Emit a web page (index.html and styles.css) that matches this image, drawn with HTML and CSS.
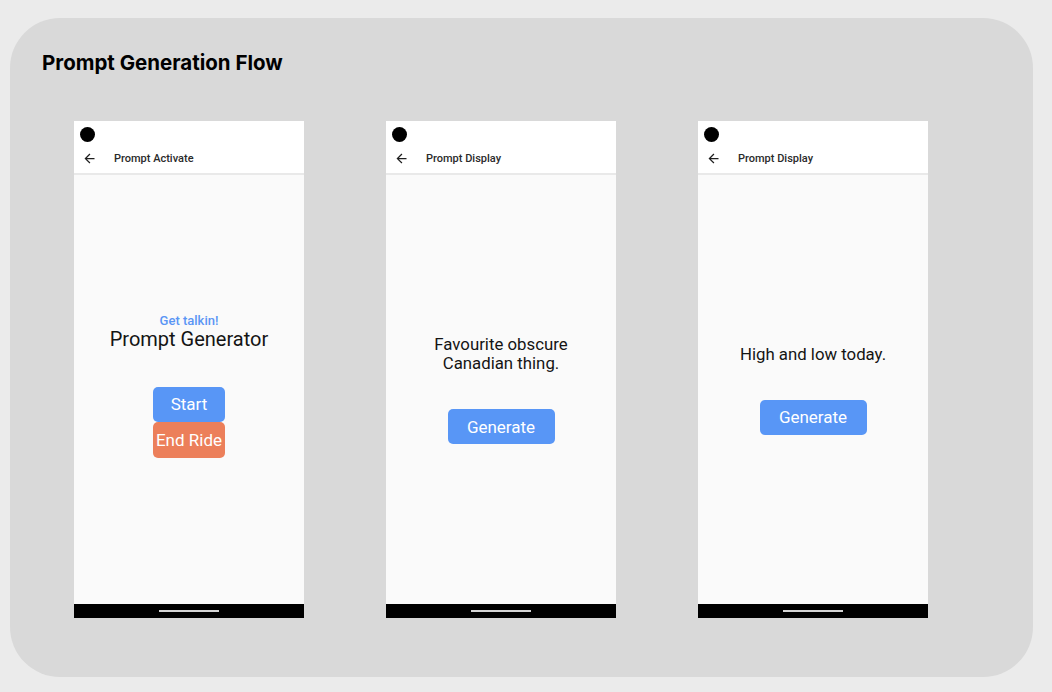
FILE: index.html
```html
<!DOCTYPE html>
<html lang="en">
<head>
<meta charset="utf-8">
<title>Prompt Generation Flow</title>
<link rel="stylesheet" href="styles.css">
</head>
<body>
<main class="board">
  <h1 class="board-title">Prompt Generation Flow</h1>
  <div class="screens">
    <section class="phone">
      <header class="phone-head">
        <div class="status"><span class="camera"></span></div>
        <div class="appbar">
          <svg class="back" viewBox="0 0 24 24" width="15" height="15"><path d="M20 11H7.83l5.59-5.59L12 4l-8 8 8 8 1.41-1.41L7.83 13H20v-2z" fill="#1f1f1f"/></svg>
          <span class="appbar-title">Prompt Activate</span>
        </div>
      </header>
      <div class="phone-body body-activate">
        <div class="group">
          <p class="kicker">Get talkin!</p>
          <p class="big-title">Prompt Generator</p>
          <div class="stack">
            <button class="btn btn-blue btn-narrow">Start</button>
            <button class="btn btn-orange btn-narrow btn-tall">End Ride</button>
          </div>
        </div>
      </div>
      <footer class="navbar"><span class="home"></span></footer>
    </section>

    <section class="phone">
      <header class="phone-head">
        <div class="status"><span class="camera"></span></div>
        <div class="appbar">
          <svg class="back" viewBox="0 0 24 24" width="15" height="15"><path d="M20 11H7.83l5.59-5.59L12 4l-8 8 8 8 1.41-1.41L7.83 13H20v-2z" fill="#1f1f1f"/></svg>
          <span class="appbar-title">Prompt Display</span>
        </div>
      </header>
      <div class="phone-body">
        <div class="group">
          <p class="prompt">Favourite obscure<br>Canadian thing.</p>
          <button class="btn btn-blue btn-wide">Generate</button>
        </div>
      </div>
      <footer class="navbar"><span class="home"></span></footer>
    </section>

    <section class="phone">
      <header class="phone-head">
        <div class="status"><span class="camera"></span></div>
        <div class="appbar">
          <svg class="back" viewBox="0 0 24 24" width="15" height="15"><path d="M20 11H7.83l5.59-5.59L12 4l-8 8 8 8 1.41-1.41L7.83 13H20v-2z" fill="#1f1f1f"/></svg>
          <span class="appbar-title">Prompt Display</span>
        </div>
      </header>
      <div class="phone-body">
        <div class="group">
          <p class="prompt">High and low today.</p>
          <button class="btn btn-blue btn-wide">Generate</button>
        </div>
      </div>
      <footer class="navbar"><span class="home"></span></footer>
    </section>
  </div>
</main>
</body>
</html>
```

FILE: styles.css
```css
html, body {
  margin: 0;
  padding: 0;
}
body {
  background: #ebebeb;
  width: 1052px;
  height: 692px;
  overflow: hidden;
  font-family: Roboto, "Liberation Sans", sans-serif;
}
.board {
  box-sizing: border-box;
  margin: 18px 0 0 10px;
  width: 1023px;
  height: 659px;
  background: #d9d9d9;
  border-radius: 50px;
  padding: 33px 32px 0 32px;
}
.board-title {
  margin: 0;
  font-family: Inter, "Liberation Sans", sans-serif;
  font-weight: 700;
  font-size: 20.5px;
  line-height: 24px;
  color: #000;
}
.screens {
  display: flex;
  gap: 82px;
  margin: 46px 0 0 32px;
}
.phone {
  width: 230px;
  height: 497px;
  display: flex;
  flex-direction: column;
  background: #fafafa;
}
.phone-head {
  background: #fff;
  height: 52px;
  border-bottom: 2px solid #e9e9e9;
  display: flex;
  flex-direction: column;
}
.status {
  padding: 6px 0 0 6px;
  height: 15px;
}
.camera {
  display: block;
  width: 15px;
  height: 15px;
  border-radius: 50%;
  background: #000;
}
.appbar {
  flex: 1;
  display: flex;
  align-items: center;
  padding-left: 8px;
  padding-top: 1px;
}
.back {
  display: block;
  margin-right: 17px;
}
.appbar-title {
  font-size: 11px;
  line-height: 13px;
  font-weight: 500;
  color: #2a2a2a;
}
.phone-body {
  flex: 1;
  display: flex;
  flex-direction: column;
  align-items: center;
  justify-content: center;
}
.body-activate {
  padding-bottom: 9px;
}
.group {
  display: flex;
  flex-direction: column;
  align-items: center;
}
.kicker {
  margin: 0;
  font-size: 13px;
  line-height: 15px;
  font-weight: 500;
  color: #5a96f5;
}
.big-title {
  margin: 0;
  font-size: 20px;
  line-height: 23px;
  color: #141414;
}
.stack {
  margin-top: 36px;
  display: flex;
  flex-direction: column;
}
.prompt {
  margin: 0;
  font-size: 16.8px;
  line-height: 19px;
  text-align: center;
  color: #141414;
}
.btn {
  border: none;
  margin: 0;
  padding: 0;
  font-family: Roboto, "Liberation Sans", sans-serif;
  font-size: 17px;
  color: #fff;
  border-radius: 5px;
  display: flex;
  align-items: center;
  justify-content: center;
}
.btn-blue {
  background: #5896f6;
}
.btn-orange {
  background: #ec7f5a;
}
.btn-narrow {
  width: 72px;
  height: 35px;
}
.btn-tall {
  height: 36px;
}
.prompt + .btn {
  margin-top: 36px;
}
.btn-wide {
  width: 107px;
  height: 35px;
}
.navbar {
  height: 14px;
  background: #000;
  display: flex;
  align-items: center;
  justify-content: center;
}
.home {
  display: block;
  width: 60px;
  height: 2px;
  background: #d4d4d4;
}
```
